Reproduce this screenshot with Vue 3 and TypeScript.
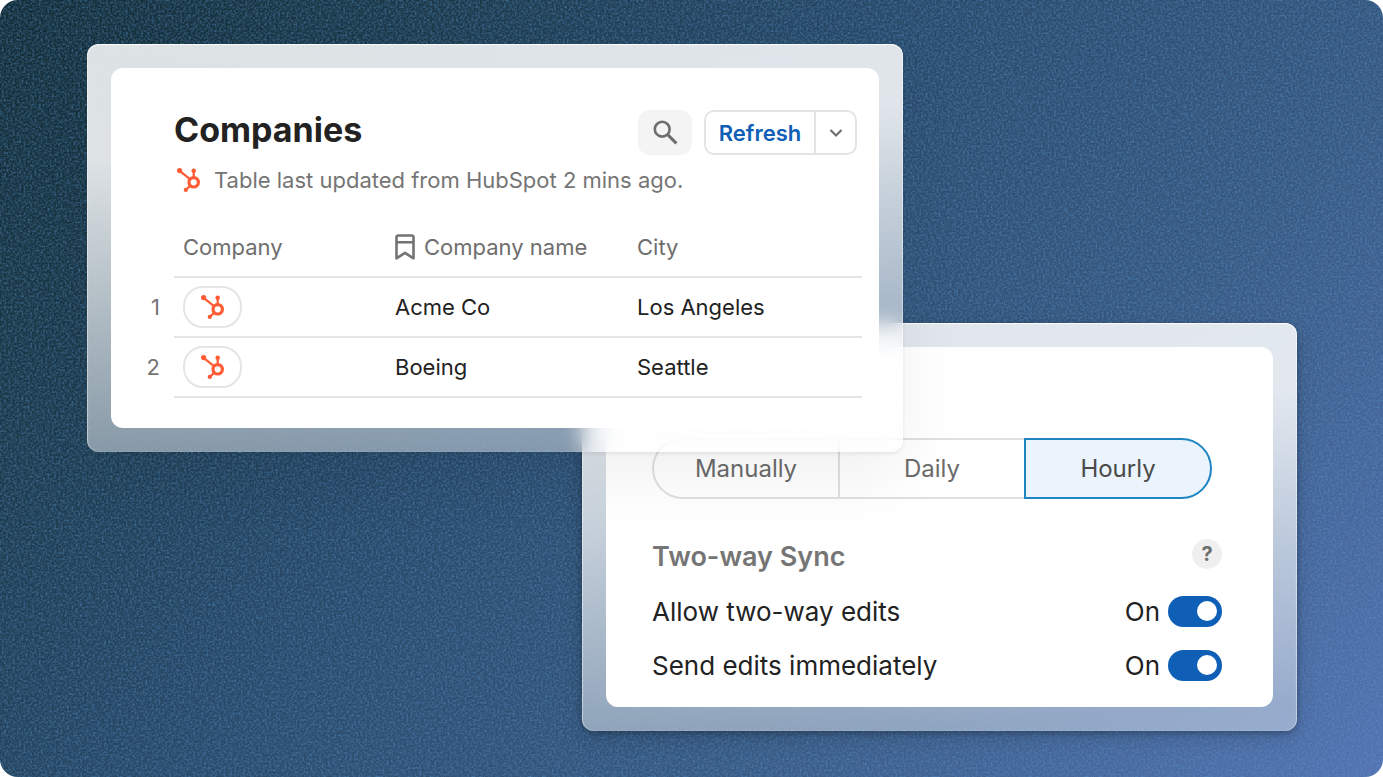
<script setup lang="ts">
import { ref } from 'vue'

interface Company {
  name: string
  city: string
}

const companies: Company[] = [
  { name: 'Acme Co', city: 'Los Angeles' },
  { name: 'Boeing', city: 'Seattle' },
]

const frequencies = ['Manually', 'Daily', 'Hourly']
const frequency = ref('Hourly')

const settings = ref([
  { id: 'two-way', label: 'Allow two-way edits', on: true },
  { id: 'immediate', label: 'Send edits immediately', on: true },
])
</script>

<template>
  <main class="stage">
    <svg class="grain" aria-hidden="true">
      <filter id="grain" x="0" y="0" width="100%" height="100%" color-interpolation-filters="sRGB">
        <feTurbulence type="fractalNoise" baseFrequency="0.46" numOctaves="2" seed="4" />
        <feColorMatrix values="0 0 0 0 0.36  0 0 0 0 0.6  0 0 0 0 0.84  1 0 0 0 -0.38" />
      </filter>
      <rect width="100%" height="100%" filter="url(#grain)" />
    </svg>

    <svg class="symbols" aria-hidden="true">
      <symbol id="sprocket" viewBox="0 0 24 24">
        <g stroke="#ff5c35" fill="none">
          <circle cx="16.7" cy="14.3" r="4.7" stroke-width="3.2" />
          <path d="M16.7 10V3M13 11.2 2.6 2.9M13.3 17.6 9 21.8" stroke-width="2.2" />
        </g>
        <g fill="#ff5c35">
          <circle cx="16.7" cy="2.8" r="2.3" />
          <circle cx="2.6" cy="2.6" r="2.6" />
          <circle cx="8.8" cy="21.9" r="2.1" />
        </g>
      </symbol>
    </svg>

    <section class="frame sync">
      <div class="panel sync-panel">
        <fieldset class="segments" aria-label="Sync frequency">
          <label v-for="f in frequencies" :key="f" class="segment" :class="{ active: frequency === f }">
            <input v-model="frequency" type="radio" name="frequency" :value="f" />
            {{ f }}
          </label>
        </fieldset>
        <div class="sync-head">
          <h2>Two-way Sync</h2>
          <button class="help" type="button" aria-label="About two-way sync">?</button>
        </div>
        <div v-for="s in settings" :key="s.id" class="setting">
          <label :for="s.id">{{ s.label }}</label>
          <span class="state">{{ s.on ? 'On' : 'Off' }}</span>
          <input :id="s.id" v-model="s.on" class="toggle" type="checkbox" />
        </div>
      </div>
    </section>

    <section class="frame companies">
      <div class="panel companies-panel">
        <header class="head">
          <h1>Companies</h1>
          <button class="search" type="button" aria-label="Search">
            <svg width="26" height="26" viewBox="0 0 26 26" fill="none" stroke="#6e6e6e">
              <circle cx="10.2" cy="9.2" r="7.4" stroke-width="2.6" />
              <path d="M15.4 14.4 24.4 23.4" stroke-width="3" />
            </svg>
          </button>
          <div class="split">
            <button class="refresh" type="button">Refresh</button>
            <button class="more" type="button" aria-label="More refresh options">
              <svg width="14" height="10" viewBox="0 0 14 10" fill="none" stroke="#6e6e6e" stroke-width="2.2">
                <path d="m1.5 2 5.5 5.5L12.5 2" />
              </svg>
            </button>
          </div>
        </header>
        <p class="updated">
          <svg width="24" height="24"><use href="#sprocket" /></svg>
          Table last updated from HubSpot 2 mins ago.
        </p>
        <table>
          <colgroup>
            <col class="c-num" />
            <col class="c-company" />
            <col class="c-name" />
            <col class="c-city" />
          </colgroup>
          <thead>
            <tr>
              <td></td>
              <th scope="col">Company</th>
              <th scope="col">
                <span class="with-icon">
                  <svg width="20" height="26" viewBox="0 0 20 26" fill="none" stroke="#737373" stroke-width="2.6" stroke-linejoin="round">
                    <path d="M1.5 3.5Q1.5 1.5 3.5 1.5H16.5Q18.5 1.5 18.5 3.5V24.3L10 18.8 1.5 24.3ZM1.5 8.2H18.5" />
                  </svg>
                  Company name
                </span>
              </th>
              <th scope="col">City</th>
            </tr>
          </thead>
          <tbody>
            <tr v-for="(c, i) in companies" :key="c.name">
              <td class="num">{{ i + 1 }}</td>
              <td>
                <span class="pill"><svg width="24" height="24"><use href="#sprocket" /></svg></span>
              </td>
              <td>{{ c.name }}</td>
              <td>{{ c.city }}</td>
            </tr>
          </tbody>
        </table>
      </div>
    </section>
  </main>
</template>

<style>
body {
  background: #fff;
}
</style>

<style scoped>
* {
  box-sizing: border-box;
}
.stage {
  position: relative;
  display: grid;
  grid-template-columns: 87fr 495fr 321fr 394fr 86fr;
  align-items: start;
  min-height: 100vh;
  padding: 44px 0;
  overflow: hidden;
  border-radius: 18px;
  background: linear-gradient(135deg, #132d36 0%, #1b3746 18%, #284866 42%, #37587f 68%, #5473b0 100%);
  font-family: Inter, "Liberation Sans", sans-serif;
  color: #222;
}
.grain {
  position: absolute;
  inset: 0;
  width: 100%;
  height: 100%;
}
.symbols {
  position: absolute;
  width: 0;
  height: 0;
}
button,
input {
  font: inherit;
  margin: 0;
  cursor: pointer;
}
button {
  padding: 0;
}
h1,
h2,
p {
  margin: 0;
}
.frame {
  position: relative;
  grid-row: 1;
  padding: 24px;
  border-radius: 12px;
  background: linear-gradient(176deg, rgba(255, 255, 255, 0.85) 25%, rgba(255, 255, 255, 0.41) 94%);
  backdrop-filter: blur(10px);
}
.companies {
  grid-column: 2 / 4;
  box-shadow: inset 0 1px 1px rgba(255, 255, 255, 0.9), inset 1px 0 1px rgba(255, 255, 255, 0.4), inset -1px 0 1px rgba(255, 255, 255, 0.4),
    0 2px 4px rgba(0, 0, 0, 0.08), 0 28px 64px rgba(0, 0, 0, 0.06);
}
.sync {
  grid-column: 3 / 5;
  margin-top: 279px;
  box-shadow: inset 0 1px 1px rgba(255, 255, 255, 0.9), inset 1px 0 1px rgba(255, 255, 255, 0.4), inset -1px 0 1px rgba(255, 255, 255, 0.4),
    0 2px 6px rgba(0, 0, 0, 0.25), 0 6px 20px rgba(0, 0, 0, 0.15);
}
.panel {
  border-radius: 12px;
  background: #fff;
}

/* Companies */
.companies-panel {
  padding: 42px 17px 30px 0;
}
.head {
  display: flex;
  align-items: flex-start;
  gap: 12px;
  padding: 0 5px 0 63px;
}
h1 {
  flex: 1;
  font-size: 34px;
  font-weight: 700;
  line-height: 40px;
}
.search {
  display: grid;
  place-items: center;
  width: 54px;
  height: 45px;
  border: 0;
  border-radius: 12px;
  background: #f4f4f4;
}
.split {
  display: flex;
  height: 45px;
  border: 2px solid #e4e4e4;
  border-radius: 10px;
}
.split button {
  border: 0;
  background: none;
}
.split .refresh {
  width: 110px;
  border-right: 2px solid #e4e4e4;
  color: #0e5fb5;
  font-size: 22px;
  font-weight: 600;
}
.split .more {
  display: grid;
  place-items: center;
  width: 39px;
}
.updated {
  display: flex;
  align-items: center;
  gap: 13px;
  margin-top: 12px;
  padding-left: 66px;
  color: #757575;
  font-size: 22px;
  line-height: 26px;
}
table {
  width: 100%;
  margin-top: 25px;
  border-collapse: separate;
  border-spacing: 0;
  table-layout: fixed;
  font-size: 22px;
}
.c-num {
  width: 63px;
}
.c-company {
  width: 212px;
}
.c-name {
  width: 242px;
}
th,
td {
  height: 60px;
  padding: 0 9px;
  border-bottom: 2px solid #e5e5e5;
  text-align: left;
  vertical-align: middle;
}
th {
  color: #6e6e6e;
  font-weight: 400;
}
td:first-child {
  padding-right: 14px;
  border-bottom-color: transparent;
}
.num {
  color: #757575;
  text-align: right;
}
.with-icon {
  display: flex;
  align-items: center;
  gap: 9px;
}
.pill {
  display: flex;
  align-items: center;
  justify-content: center;
  width: 59px;
  height: 42px;
  border: 2px solid #e5e5e5;
  border-radius: 20px;
}

/* Two-way sync */
.sync-panel {
  padding: 91px 51px 15px 46px;
}
.segments {
  display: flex;
  height: 61px;
  margin: 0 10px 0 0;
  padding: 0;
  border: 0;
}
.segment {
  display: flex;
  flex: 1;
  align-items: center;
  justify-content: center;
  border: 2px solid #e0e0e0;
  border-right: 0;
  color: #6b6b6b;
  font-size: 24px;
  cursor: pointer;
}
.segment:first-child {
  border-radius: 31px 0 0 31px;
}
.segment:last-child {
  border-right: 2px solid #e0e0e0;
  border-radius: 0 31px 31px 0;
}
.segment.active {
  border: 2px solid #1e84c2;
  background: #ebf4fc;
  color: #4a4a4a;
}
.segment input {
  position: absolute;
  opacity: 0;
}
.sync-head {
  display: flex;
  justify-content: space-between;
  align-items: flex-start;
  height: 54px;
  margin-top: 31px;
  padding-top: 9px;
}
h2 {
  color: #757575;
  font-size: 27px;
  font-weight: 600;
  line-height: 36px;
}
.help {
  width: 30px;
  height: 30px;
  border: 0;
  border-radius: 50%;
  background: #efefef;
  color: #6e6e6e;
  font-size: 20px;
  font-weight: 700;
  line-height: 30px;
}
.setting {
  display: flex;
  align-items: center;
  height: 54px;
  font-size: 26px;
}
.setting label {
  flex: 1;
}
.toggle {
  appearance: none;
  display: flex;
  align-items: center;
  width: 54px;
  height: 31px;
  margin-left: 8px;
  padding: 0 5px;
  border-radius: 16px;
  background: #9a9a9a;
}
.toggle::before {
  content: "";
  width: 20px;
  height: 20px;
  border-radius: 50%;
  background: #fff;
}
.toggle:checked {
  justify-content: flex-end;
  background: #0e5fb5;
}
</style>
